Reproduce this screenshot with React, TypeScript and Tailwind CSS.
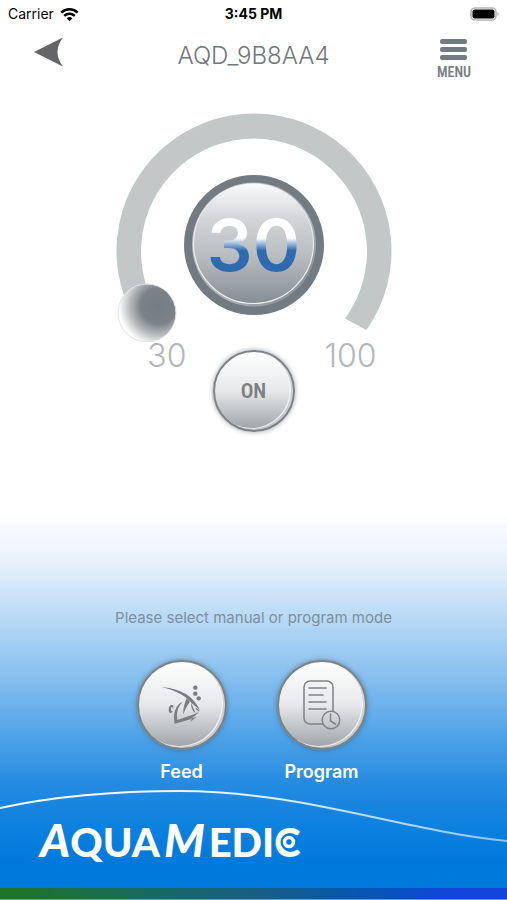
import { useState } from "react";
import type { ReactNode } from "react";

function StatusBar() {
  return (
    <div className="grid h-7 grid-cols-3 items-center px-2 text-[14px] leading-5 text-black">
      <div className="flex items-center gap-1.5">
        <span>Carrier</span>
        <svg className="h-[15px] w-[19px]" viewBox="0 0 19 15" fill="none" stroke="currentColor" aria-hidden="true">
          <path d="M1.3 5.6a11.8 11.8 0 0 1 16.4 0" strokeWidth="2.6" />
          <path d="M4.2 8.8a7.7 7.7 0 0 1 10.6 0" strokeWidth="2.4" />
          <path d="M9.5 14.2 6.6 11.3a4.3 4.3 0 0 1 5.8 0z" fill="currentColor" stroke="none" />
        </svg>
      </div>
      <span className="text-center font-bold">3:45 PM</span>
      <div className="flex justify-end">
        <svg className="h-[15px] w-[31px]" viewBox="0 0 31 15" aria-hidden="true">
          <rect x="3" y="1" width="25" height="12" rx="4" fill="#fff" stroke="#b5b5b5" strokeWidth="1.6" />
          <rect x="4.500" y="2.500" width="22" height="9" rx="2" fill="#000" />
          <path d="M29.400 5c1.600.6 1.600 3.400 0 4z" fill="#b5b5b5" />
        </svg>
      </div>
    </div>
  );
}

function Header() {
  return (
    <header className="grid h-16 grid-cols-[1fr_auto_1fr] items-start px-8 pt-2">
      <button type="button" aria-label="Back" className="w-8 justify-self-start">
        <svg className="h-8 w-8" viewBox="0 0 32 32" aria-hidden="true">
          <path d="M2 16 31 1.500Q20 16 31 30.500z" fill="#626669" />
        </svg>
      </button>
      <h1 className="pt-1 text-[24px] leading-8 font-light text-[#70777b]">AQD_9B8AA4</h1>
      <button type="button" className="flex flex-col items-center justify-self-end pt-[3px] pr-1">
        <svg className="h-[21px] w-[27px]" viewBox="0 0 27 21" fill="#747c82" aria-hidden="true">
          <rect width="27" height="5" rx="2" />
          <rect y="8" width="27" height="5" rx="2" />
          <rect y="16" width="27" height="5" rx="2" />
        </svg>
        <span className="pt-1 font-['Liberation_Sans_Narrow','Roboto_Condensed','Roboto',sans-serif] text-[14px] leading-4 font-semibold text-[#7b8287]">
          MENU
        </span>
      </button>
    </header>
  );
}

function Dial({ value, onChange }: { value: number; onChange: (v: number) => void }) {
  return (
    <div className="relative mx-auto mt-5 h-[230px] w-[276px]">
      <svg className="h-full w-full" viewBox="116 112 276 230" aria-hidden="true">
        <defs>
          <linearGradient id="face" x1="0" y1="0" x2="0" y2="1">
            <stop offset="0" stopColor="#fafafb" />
            <stop offset=".3" stopColor="#d2d5d7" />
            <stop offset=".6" stopColor="#b9bdc0" />
            <stop offset="1" stopColor="#858d94" />
          </linearGradient>
          <linearGradient id="rim" x1="0" y1="0" x2="1" y2="1">
            <stop offset="0" stopColor="#c6cacd" />
            <stop offset=".35" stopColor="#aeb4b8" />
            <stop offset=".65" stopColor="#a9afb4" />
            <stop offset="1" stopColor="#7a8288" />
          </linearGradient>
          <linearGradient id="shine" x1="0" y1="0" x2="0" y2="1">
            <stop offset="0" stopColor="#fff" stopOpacity=".3" />
            <stop offset=".5" stopColor="#fff" stopOpacity=".7" />
            <stop offset="1" stopColor="#fff" stopOpacity=".9" />
          </linearGradient>
          <radialGradient id="ball" cx=".7" cy=".38" r=".74">
            <stop offset="0" stopColor="#757d84" />
            <stop offset=".42" stopColor="#7b8389" />
            <stop offset=".66" stopColor="#b4b8ba" />
            <stop offset=".92" stopColor="#fdfdfd" />
          </radialGradient>
        </defs>
        <path d="M141.500 330A137.500 137.500 0 1 1 366.500 330L345 318.500A113 113 0 1 0 163 318.500z" fill="#c2c7c8" />
        <circle cx="254" cy="245" r="70" fill="#737b82" />
        <circle cx="254" cy="244.500" r="62" fill="url(#rim)" />
        <circle cx="253.500" cy="243.500" r="60" fill="url(#face)" stroke="url(#shine)" strokeWidth="1.200" />
        <circle cx="147" cy="313" r="29" fill="url(#ball)" stroke="#e2e5e5" strokeWidth="1" />
      </svg>
      <output className="absolute inset-x-0 top-[89px] bg-linear-to-b from-white from-42% via-[#2f6bae] via-56% to-[#2d68ad] bg-clip-text text-center text-[72px] leading-[88px] font-semibold text-transparent">
        {value}
      </output>
      <input
        type="range"
        min={30}
        max={100}
        value={value}
        onChange={(e) => onChange(Number(e.target.value))}
        aria-label="Pump power"
        className="absolute inset-0 h-full w-full cursor-pointer opacity-0"
      />
    </div>
  );
}

function MetalFace({ children, className }: { children: ReactNode; className: string }) {
  return (
    <span
      className={`flex items-center justify-center rounded-full border-2 border-[#7d8285] bg-linear-to-b from-white via-[#e6e8e9] via-50% to-[#9da3a6] shadow-[0_0_5px_rgba(60,70,80,0.5),inset_-2px_-1px_0_rgba(130,136,140,0.35),inset_-3px_-2px_0_rgba(255,255,255,0.75)] ${className}`}
    >
      {children}
    </span>
  );
}

function FishIcon() {
  return (
    <svg className="h-[60px] w-[55px]" viewBox="0 0 165 180" fill="#777d80" aria-hidden="true">
      <path d="M22 36C60 39 95 52 114 71c11 12 19 23 23 34-10-9-21-17-30-27C88 58 56 44 22 36z" />
      <path d="M86 80C66 88 56 112 62 146l48-13 26-22-22 9-44 15c-3-20 0-38 16-55z" />
      <path d="m108 141 20-15-14 4z" />
      <path d="m98 70 10 10c-9 12-14 22-20 38-1-18 3-32 10-48z" />
      <path d="m111 83 14 32c-10-7-14-17-14-32z" />
      <path d="M124 98c8 2 13 7 12 12l-8-5z" />
      <path d="M58 91c-13-6-19 17-9 24l8-5c-8-2-8-14-3-14l4 5z" />
      <circle cx="124" cy="38" r="6.500" />
      <circle cx="124" cy="56" r="6.500" />
      <circle cx="134" cy="70" r="6.500" />
    </svg>
  );
}

function ProgramIcon() {
  return (
    <svg className="h-[50px] w-[38px]" viewBox="0 0 38 50" fill="none" stroke="#7d8386" strokeWidth="1.500" strokeLinecap="round" aria-hidden="true">
      <path d="M19.500 44H7a6 6 0 0 1-6-6V7a6 6 0 0 1 6-6h17a6 6 0 0 1 6 6v24" />
      <path d="M6 8h17M6 15h14M6 22h17M6 29h17" />
      <circle cx="28" cy="40" r="8.800" />
      <path d="M27.500 34v7l5 3" />
    </svg>
  );
}

function ModeButton({ label, children }: { label: string; children: ReactNode }) {
  return (
    <button type="button" className="flex w-[90px] flex-col items-center gap-2">
      <MetalFace className="h-[90px] w-[90px]">{children}</MetalFace>
      <span className="text-[18px] leading-7 font-semibold text-white">{label}</span>
    </button>
  );
}

function Logo() {
  return (
    <div
      aria-label="Aqua Medic"
      className="flex items-baseline pl-10 font-['Lato','Open_Sans',sans-serif] text-[40px] leading-[44px] font-black text-white"
    >
      <span className="text-[46px] italic">A</span>
      <span>QUA</span>
      <span className="px-1 text-[46px] italic">M</span>
      <span>EDI</span>
      <span className="relative">
        C
        <svg className="absolute top-1/2 left-1.5 h-[18px] w-[18px] -translate-y-1/2" viewBox="0 0 18 18" fill="none" aria-hidden="true">
          <circle cx="9" cy="9" r="8.500" fill="#0079dc" />
          <circle cx="9" cy="9" r="4.500" stroke="#fff" strokeWidth="3.600" />
        </svg>
      </span>
    </div>
  );
}

export default function App() {
  const [power, setPower] = useState(30);
  const [on, setOn] = useState(true);

  return (
    <div className="flex min-h-screen flex-col bg-[linear-gradient(to_bottom,#fff_57%,#e9f3fc_62%,#c4e0f7_67%,#98c8f1_73%,#5eabea_80%,#258be1_87%,#0c80de_92%,#0079dc_96%)] font-['Inter','Liberation_Sans',sans-serif]">
      <StatusBar />
      <Header />
      <main className="flex flex-1 flex-col">
        <Dial value={power} onChange={setPower} />
        <div className="grid grid-cols-[1fr_auto_1fr] items-start">
          <span className="pr-[26px] text-right text-[32px] leading-7 font-light text-[#b3b7b9]">30</span>
          <button type="button" onClick={() => setOn(!on)} className="mt-2">
            <MetalFace className="h-[82px] w-[82px]">
              <span className="font-['Liberation_Sans_Narrow','Roboto_Condensed','Roboto',sans-serif] text-[21px] leading-6 font-semibold text-[#7b8184]">
                {on ? "ON" : "OFF"}
              </span>
            </MetalFace>
          </button>
          <span className="pl-[30px] text-left text-[32px] leading-7 font-light text-[#b3b7b9]">100</span>
        </div>
        <p className="mt-auto text-center text-[15px] leading-5 text-[#7f8f9b]">Please select manual or program mode</p>
        <div className="mt-8 flex justify-center gap-[50px] pr-1">
          <ModeButton label="Feed">
            <FishIcon />
          </ModeButton>
          <ModeButton label="Program">
            <ProgramIcon />
          </ModeButton>
        </div>
      </main>
      <footer className="relative pt-8">
        <svg className="absolute inset-x-0 top-0 h-[60px] w-full" viewBox="0 786 507 60" preserveAspectRatio="none" fill="none" aria-hidden="true">
          <defs>
            <linearGradient id="wave" x1="0" y1="0" x2="1" y2="0">
              <stop offset="0" stopColor="#fff" />
              <stop offset=".5" stopColor="#e4f2fd" />
              <stop offset="1" stopColor="#8cc4f2" />
            </linearGradient>
          </defs>
          <path d="M0 808C60 795 120 791 180 791 300 791 400 830 507 841" stroke="url(#wave)" strokeWidth="2" />
        </svg>
        <div className="relative pb-6">
          <Logo />
        </div>
        <div className="h-3 border-b border-[#5f9fd8] bg-linear-to-r from-[#1f7427] from-5% via-[#175f82] via-50% to-[#1443dc] to-90%" />
      </footer>
    </div>
  );
}
